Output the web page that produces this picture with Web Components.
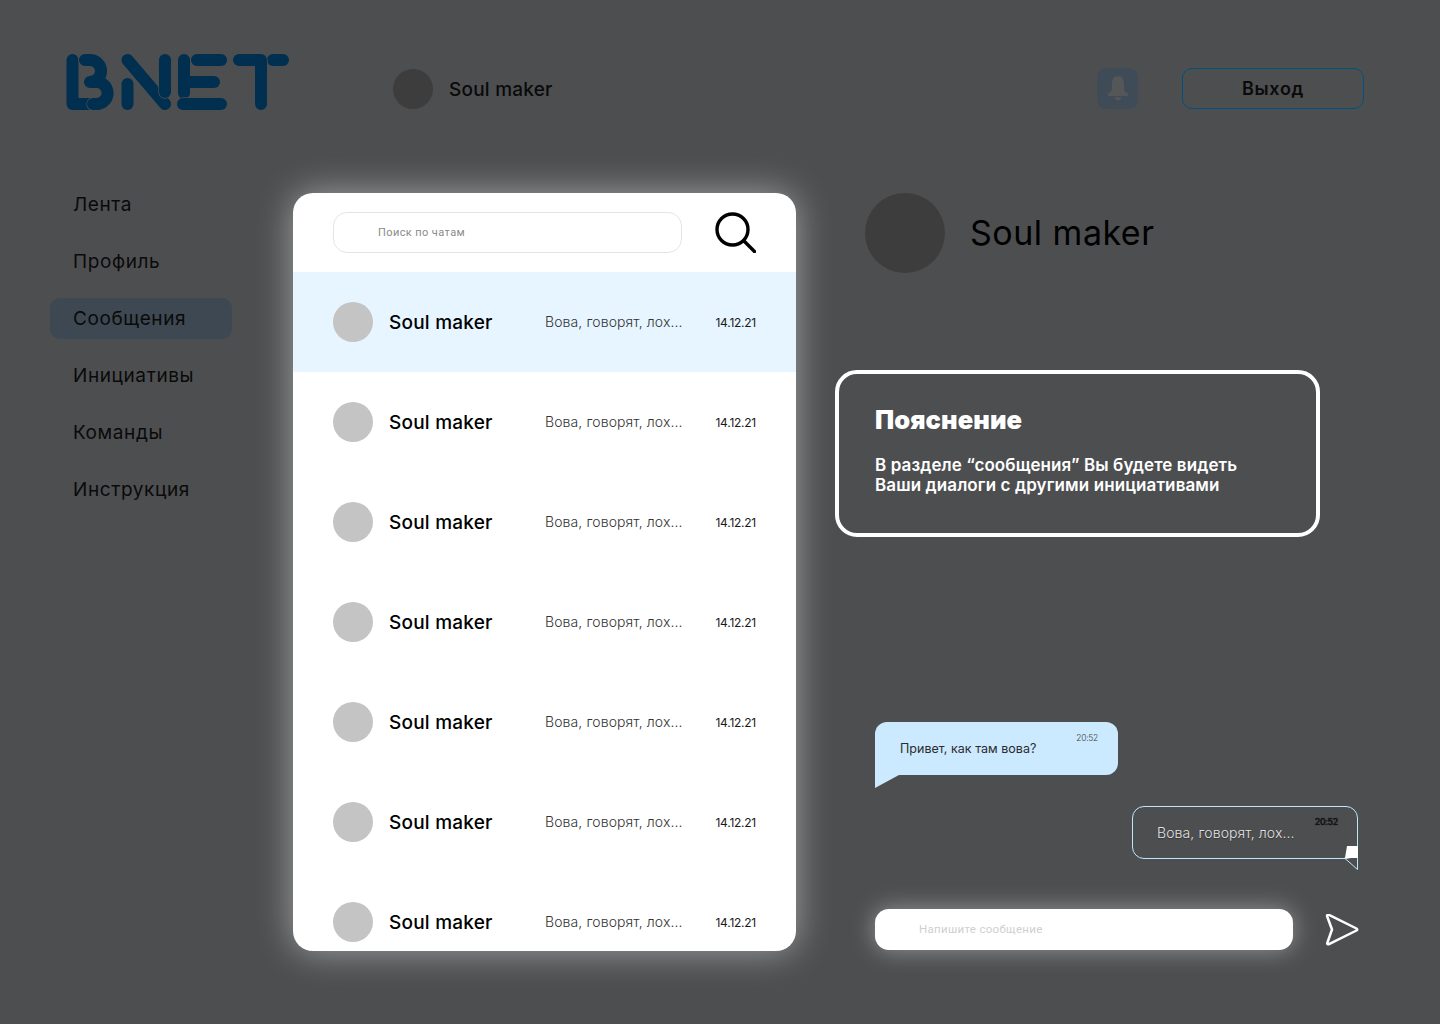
<!DOCTYPE html>
<html lang="ru">
<head>
<meta charset="utf-8">
<title>BNET</title>
<style>
  html, body { margin: 0; height: 100%; }
  body { background: #4d4e50; font-family: Inter, "Noto Sans", sans-serif; overflow: hidden; }
  .main { display: flex; align-items: flex-start; padding-left: 50px; }
</style>
</head>
<body>
<bnet-header name="Soul maker"></bnet-header>
<div class="main">
  <side-nav></side-nav>
  <chat-list></chat-list>
  <chat-view name="Soul maker"></chat-view>
</div>

<script>
const navItems = ['Лента', 'Профиль', 'Сообщения', 'Инициативы', 'Команды', 'Инструкция'];

class BnetLogo extends HTMLElement {
  constructor() {
    super();
    this.attachShadow({ mode: 'open' });
    // each letter is a set of round strokes, the thin slits are bg coloured under-strokes
    const ink = '#002f50', bg = '#4d4e50';
    const cut = (d) => `<path d="${d}" stroke="${bg}" stroke-width="13.400"/><path d="${d}" stroke="${ink}"/>`;
    this.shadowRoot.innerHTML = `
      <style>
        :host { display: block; width: 223px; height: 56px; }
        svg { display: block; }
      </style>
      <svg width="223" height="56" viewBox="0 0 223 56" fill="none" stroke="${ink}" stroke-width="12" stroke-linecap="round" stroke-linejoin="round">
        <path d="M6.5 6V50H22"/>
        ${cut('M19 6H24A11 11 0 0 1 24 28H29A11 11 0 0 1 32 50H27')}
        <path d="M61.5 50V30"/>
        ${cut('M61.5 6L99 50')}
        ${cut('M99 6V38')}
        <path d="M118 6V39"/>
        <path d="M118 28H148"/>
        ${cut('M131 6H155')}
        ${cut('M117 50H155')}
        <path d="M207 6H217"/>
        ${cut('M173 6H195V50')}
      </svg>`;
  }
}

class BnetHeader extends HTMLElement {
  constructor() {
    super();
    this.attachShadow({ mode: 'open' });
    this.shadowRoot.innerHTML = `
      <style>
        :host { display: flex; align-items: flex-start; height: 183px; box-sizing: border-box; padding: 54px 76px 0 66px; color: #0a0a0a; }
        .user { display: flex; align-items: center; gap: 16px; margin: 15px 0 0 104px; font-size: 19px; font-weight: 500; letter-spacing: .22px; }
        .ava { width: 40px; height: 40px; border-radius: 50%; background: #3d3d3d; }
        .bell { width: 41px; height: 41px; border-radius: 9px; background: #3f4b56; margin: 14px 44px 0 auto; display: flex; align-items: center; justify-content: center; }
        .out { width: 182px; height: 41px; box-sizing: border-box; margin-top: 14px; border: 1px solid #00517f; border-radius: 10px; display: flex; align-items: center; justify-content: center; font-size: 18px; font-weight: 600; letter-spacing: .7px; }
      </style>
      <bnet-logo></bnet-logo>
      <div class="user"><div class="ava"></div><span>${this.getAttribute('name')}</span></div>
      <div class="bell">
        <svg width="22" height="25" viewBox="0 0 22 25" fill="#555657">
          <path d="M11 0C6.6 0 5 3.6 5 7.5V12C5 14.500 3.500 16 1.200 17.600C0 18.400 .5 20 2 20H20C21.500 20 22 18.400 20.800 17.600C18.500 16 17 14.500 17 12V7.500C17 3.600 15.400 0 11 0Z"/>
          <path d="M7.500 21.200H14.500C14 23.400 12.600 24.500 11 24.500S8 23.400 7.500 21.200Z"/>
        </svg>
      </div>
      <div class="out">Выход</div>`;
  }
}

class SideNav extends HTMLElement {
  constructor() {
    super();
    this.attachShadow({ mode: 'open' });
    const items = navItems.map((label) => `<div class="item${label === 'Сообщения' ? ' active' : ''}">${label}</div>`).join('');
    this.shadowRoot.innerHTML = `
      <style>
        :host { display: flex; flex-direction: column; gap: 16px; flex: none; width: 182px; margin: 1px 61px 0 0; color: #0a0a0a; }
        .item { height: 41px; display: flex; align-items: center; padding-left: 23px; border-radius: 10px; font-size: 19px; letter-spacing: .6px; }
        .active { background: #3e4852; }
      </style>
      ${items}`;
  }
}

class ChatRow extends HTMLElement {
  constructor() {
    super();
    this.attachShadow({ mode: 'open' });
    this.shadowRoot.innerHTML = `
      <style>
        :host { display: flex; align-items: center; flex: none; height: 100px; box-sizing: border-box; padding: 0 40px; color: #000; }
        :host([active]) { background: #e6f5ff; }
        .ava { width: 40px; height: 40px; border-radius: 50%; background: #c4c4c4; flex: none; }
        .name { width: 156px; margin-left: 16px; flex: none; font-size: 19px; font-weight: 500; letter-spacing: .22px; }
        .msg { font-size: 14px; font-weight: 300; color: #333; padding-bottom: 1px; letter-spacing: .1px; white-space: nowrap; }
        .date { margin-left: auto; font-size: 12px; font-weight: 400; letter-spacing: -.25px; color: #1a1a1a; }
      </style>
      <div class="ava"></div>
      <div class="name">Soul maker</div>
      <div class="msg">Вова, говорят, лох...</div>
      <div class="date">14.12.21</div>`;
  }
}

class ChatList extends HTMLElement {
  constructor() {
    super();
    this.attachShadow({ mode: 'open' });
    let rows = '<chat-row active></chat-row>';
    for (let i = 0; i < 6; i++) rows += '<chat-row></chat-row>';
    this.shadowRoot.innerHTML = `
      <style>
        :host { display: flex; flex-direction: column; flex: none; width: 503px; height: 758px; margin: 10px 39px 0 0; border-radius: 20px; background: #fff; overflow: hidden; box-shadow: 0 0 36px rgba(255,255,255,.48); }
        .top { display: flex; justify-content: space-between; flex: none; height: 79px; box-sizing: border-box; padding: 19px 40px 0; }
        .search { width: 349px; height: 41px; box-sizing: border-box; border: 1px solid #e4e4e4; border-radius: 14px; padding-left: 44px; display: flex; align-items: center; font-family: Roboto, sans-serif; font-size: 11px; letter-spacing: .4px; color: #8a8a8a; }
        svg { display: block; }
      </style>
      <div class="top">
        <div class="search">Поиск по чатам</div>
        <svg width="41" height="41" viewBox="0 0 41 41" fill="none" stroke="#000" stroke-width="3.400" stroke-linecap="round">
          <circle cx="17.500" cy="17.500" r="15.500"/><path d="M29 29L39.500 39.500"/>
        </svg>
      </div>
      ${rows}`;
  }
}

class HintBox extends HTMLElement {
  constructor() {
    super();
    this.attachShadow({ mode: 'open' });
    this.shadowRoot.innerHTML = `
      <style>
        :host { display: block; width: 485px; height: 167px; box-sizing: border-box; border: 4px solid #fff; border-radius: 22px; padding: 31px 36px 0; color: #fff; }
        h3 { margin: 0 0 20px; font-size: 25.500px; line-height: 30px; font-weight: 900; letter-spacing: .1px; }
        p { margin: 0; font-size: 17px; line-height: 20px; font-weight: 600; letter-spacing: .1px; }
      </style>
      <h3><slot name="title"></slot></h3>
      <p><slot></slot></p>`;
  }
}

class MsgIn extends HTMLElement {
  constructor() {
    super();
    this.attachShadow({ mode: 'open' });
    this.shadowRoot.innerHTML = `
      <style>
        :host { display: block; position: relative; width: 243px; height: 53px; box-sizing: border-box; padding: 19px 25px 0; margin-left: 40px; background: #cbe9ff; border-radius: 12px 12px 12px 0; font-size: 12.500px; line-height: 15px; letter-spacing: .02px; color: #2c2c2c; }
        .time { position: absolute; top: 9px; right: 20px; font-size: 8.500px; font-weight: 300; color: #444; letter-spacing: -.3px; }
        .tail { position: absolute; left: 0; top: 100%; width: 24px; height: 13px; background: #cbe9ff; clip-path: polygon(0 0, 100% 0, 0 100%); }
      </style>
      <slot></slot><span class="time">${this.getAttribute('time')}</span><span class="tail"></span>`;
  }
}

class MsgOut extends HTMLElement {
  constructor() {
    super();
    this.attachShadow({ mode: 'open' });
    this.shadowRoot.innerHTML = `
      <style>
        :host { display: block; position: relative; width: 226px; height: 53px; box-sizing: border-box; padding: 17px 24px 0; margin: 31px 0 0 297px; border: 1px solid #bfe6fb; border-radius: 12px; font-size: 14px; font-weight: 300; line-height: 17px; letter-spacing: .1px; color: #e2e2e2; text-shadow: 0 1px 1px rgba(0,0,0,.35); }
        .time { position: absolute; top: 6px; right: 19px; font-size: 9px; font-weight: 400; color: #111; letter-spacing: -.3px; text-shadow: 0 0 1px #000; }
        svg { position: absolute; right: -1px; bottom: -12px; display: block; }
      </style>
      <slot></slot><span class="time">${this.getAttribute('time')}</span>
      <svg width="14" height="25" viewBox="0 0 14 25" fill="none">
        <path d="M3 1H14V13H1Z" fill="#fff"/>
        <path d="M.5 13L13.500 24.500V13" stroke="#bfe6fb"/>
      </svg>`;
  }
}

class MsgInput extends HTMLElement {
  constructor() {
    super();
    this.attachShadow({ mode: 'open' });
    this.shadowRoot.innerHTML = `
      <style>
        :host { display: flex; align-items: center; gap: 32px; margin: 50px 0 0 40px; }
        .field { width: 418px; height: 41px; box-sizing: border-box; padding: 0 0 1px 44px; display: flex; align-items: center; background: #fff; border-radius: 14px; box-shadow: 0 0 24px rgba(255,255,255,.42); font-family: Roboto, sans-serif; font-size: 11.500px; letter-spacing: .3px; color: #cfcfcf; }
        svg { display: block; }
      </style>
      <div class="field">Напишите сообщение</div>
      <svg width="34" height="32" viewBox="0 0 34 32" fill="none" stroke="#fff" stroke-width="2.500" stroke-linejoin="round">
        <path d="M2 2C2 1 3 .5 4 .9L31.500 14.500C32.500 15 32.500 16 31.500 16.500L4 30.100C3 30.500 2 30 2.300 29L7 15.500Z"/>
      </svg>`;
  }
}

class ChatView extends HTMLElement {
  constructor() {
    super();
    this.attachShadow({ mode: 'open' });
    this.shadowRoot.innerHTML = `
      <style>
        :host { display: block; flex: none; width: 529px; margin-top: 10px; color: #000; }
        .who { display: flex; align-items: center; gap: 25px; padding-left: 30px; margin-bottom: 97px; font-size: 34px; font-weight: 400; letter-spacing: .5px; }
        .who span { padding-bottom: 2px; }
        .ava { width: 80px; height: 80px; border-radius: 50%; background: #3d3d3d; }
        .msgs { margin-top: 185px; }
      </style>
      <div class="who"><div class="ava"></div><span>${this.getAttribute('name')}</span></div>
      <hint-box>
        <span slot="title">Пояснение</span>
        В разделе “сообщения” Вы будете видеть<br>Ваши диалоги с другими инициативами
      </hint-box>
      <div class="msgs">
        <msg-in time="20:52">Привет, как там вова?</msg-in>
        <msg-out time="20:52">Вова, говорят, лох...</msg-out>
      </div>
      <msg-input></msg-input>`;
  }
}

customElements.define('bnet-logo', BnetLogo);
customElements.define('bnet-header', BnetHeader);
customElements.define('side-nav', SideNav);
customElements.define('chat-row', ChatRow);
customElements.define('chat-list', ChatList);
customElements.define('hint-box', HintBox);
customElements.define('msg-in', MsgIn);
customElements.define('msg-out', MsgOut);
customElements.define('msg-input', MsgInput);
customElements.define('chat-view', ChatView);
</script>
</body>
</html>
